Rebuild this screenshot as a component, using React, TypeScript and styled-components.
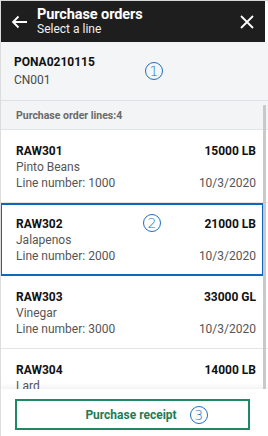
import React, { FunctionComponent } from 'react'
import styled, { createGlobalStyle, css } from 'styled-components'

const GlobalStyle = createGlobalStyle`
  html, body {
    margin: 0;
    padding: 0;
    background: #ffffff;
  }
  body {
    font-family: Roboto, "Liberation Sans", sans-serif;
    -webkit-font-smoothing: antialiased;
  }
`

const Screen = styled.div`
  position: relative;
  width: 268px;
  height: 436px;
  box-sizing: border-box;
  border-top: 1px solid #d6d6d6;
  border-left: 1px solid #dcdcdc;
  display: flex;
  flex-direction: column;
  overflow: hidden;
  background: #ffffff;
`
const Header = styled.header`
  height: 41px;
  margin-right: 3px;
  background: #1e1e1e;
  color: #ffffff;
  display: flex;
  align-items: center;
  padding: 0 9px 0 9px;
  flex-shrink: 0;
`
const IconButton = styled.div`
  width: 18px;
  height: 18px;
  display: flex;
  align-items: center;
  justify-content: center;
`
const TitleBlock = styled.div`
  flex: 1;
  margin-left: 9px;
  display: flex;
  flex-direction: column;
  padding-bottom: 2px;
`
const Title = styled.div`
  font-size: 14.5px;
  font-weight: 700;
  line-height: 17px;
  letter-spacing: -0.1px;
`
const Subtitle = styled.div`
  font-size: 12px;
  line-height: 13px;
  color: #f0f0f0;
`
const Info = styled.section`
  height: 58px;
  background: #f3f5f7;
  border-bottom: 1px solid #dde1e5;
  display: flex;
  align-items: center;
  padding-left: 13px;
  flex-shrink: 0;
`
const InfoText = styled.div`
  display: flex;
  flex-direction: column;
  width: 131px;
`
const OrderId = styled.div`
  font-size: 12px;
  font-weight: 700;
  line-height: 18px;
  color: #111111;
`
const Vendor = styled.div`
  font-size: 12px;
  line-height: 18px;
  color: #4a4a4a;
`
const Marker = styled.span`
  width: 18px;
  height: 18px;
  box-sizing: border-box;
  border: 1px solid #1d6fc4;
  border-radius: 50%;
  color: #1d6fc4;
  font-family: "DejaVu Sans", sans-serif;
  font-size: 14px;
  font-weight: 200;
  line-height: 16px;
  display: inline-flex;
  align-items: center;
  justify-content: center;
  flex-shrink: 0;
`
const ItemMarker = styled(Marker)`
  position: absolute;
  left: 143px;
  top: 11px;
`
const Body = styled.div`
  position: relative;
  flex: 1;
  overflow: hidden;
`
const ListHeader = styled.div`
  height: 28px;
  background: #f2f4f6;
  border-bottom: 1px solid #e1e4e7;
  display: flex;
  align-items: center;
  padding-left: 15px;
  font-size: 10.5px;
  font-weight: 700;
  color: #6a6a6a;
`
const Item = styled.div<{ selected: boolean }>`
  position: relative;
  height: 73px;
  box-sizing: border-box;
  border-bottom: 1px solid #e4e4e4;
  margin-left: -1px;
  padding: 13px 12px 0 16px;
  display: flex;
  flex-direction: column;
  ${(props) =>
    props.selected &&
    css`
      outline: 2px solid #0f67bd;
      outline-offset: -2px;
      margin-right: 4px;
      padding-right: 8px;
    `}
`
const ItemRow = styled.div`
  display: flex;
  justify-content: space-between;
  height: 16px;
  font-size: 12px;
  line-height: 16px;
  color: #555555;
  white-space: nowrap;
`
const Strong = styled.span`
  font-weight: 700;
  color: #111111;
`
const Scrollbar = styled.div`
  position: absolute;
  right: 2px;
  top: 4px;
  width: 3px;
  height: 294px;
  background: #c9c9c9;
  border-radius: 1px;
  z-index: 2;
`
const Footer = styled.footer`
  position: relative;
  z-index: 1;
  height: 47px;
  background: #ffffff;
  box-shadow: 0 -3px 4px rgba(0, 0, 0, 0.05);
  padding: 10px 18px 6px 14px;
  box-sizing: border-box;
  flex-shrink: 0;
`
const ReceiptButton = styled.button`
  width: 100%;
  height: 31px;
  border: 2px solid #1f8a61;
  background: #ffffff;
  color: #1c7d55;
  font-family: Roboto, "Liberation Sans", sans-serif;
  font-size: 12px;
  font-weight: 700;
  display: flex;
  align-items: center;
  justify-content: center;
  gap: 13px;
  padding: 0 0 0 28px;
`

interface Line {
  code: string
  name: string
  qty: string
  line: string
  date: string
  marker?: string
}

const lines: Line[] = [
  { code: 'RAW301', name: 'Pinto Beans', qty: '15000 LB', line: '1000', date: '10/3/2020' },
  { code: 'RAW302', name: 'Jalapenos', qty: '21000 LB', line: '2000', date: '10/3/2020', marker: '2' },
  { code: 'RAW303', name: 'Vinegar', qty: '33000 GL', line: '3000', date: '10/3/2020' },
  { code: 'RAW304', name: 'Lard', qty: '14000 LB', line: '4000', date: '10/3/2020' },
]

const App: FunctionComponent = () => {
  return (
    <>
      <GlobalStyle />
      <Screen>
        <Header>
          <IconButton>
            <svg width="17" height="14" viewBox="0 0 17 14" fill="none" stroke="#fff" strokeWidth="1.8">
              <path d="M16 7H2M7.5 1.5L2 7l5.5 5.5" />
            </svg>
          </IconButton>
          <TitleBlock>
            <Title>Purchase orders</Title>
            <Subtitle>Select a line</Subtitle>
          </TitleBlock>
          <IconButton>
            <svg width="14" height="14" viewBox="0 0 14 14" fill="none" stroke="#fff" strokeWidth="1.8">
              <path d="M1 1l12 12M13 1L1 13" />
            </svg>
          </IconButton>
        </Header>
        <Info>
          <InfoText>
            <OrderId>PONA0210115</OrderId>
            <Vendor>CN001</Vendor>
          </InfoText>
          <Marker>1</Marker>
        </Info>
        <Body>
          <Scrollbar />
          <ListHeader>Purchase order lines:4</ListHeader>
          {lines.map((item) => (
            <Item key={item.code} selected={item.code === 'RAW302'}>
              {item.marker && <ItemMarker>{item.marker}</ItemMarker>}
              <ItemRow>
                <Strong>{item.code}</Strong>
                <Strong>{item.qty}</Strong>
              </ItemRow>
              <ItemRow>
                <span>{item.name}</span>
              </ItemRow>
              <ItemRow>
                <span>Line number: {item.line}</span>
                <span>{item.date}</span>
              </ItemRow>
            </Item>
          ))}
        </Body>
        <Footer>
          <ReceiptButton>
            Purchase receipt
            <Marker>3</Marker>
          </ReceiptButton>
        </Footer>
      </Screen>
    </>
  )
}

export default App
